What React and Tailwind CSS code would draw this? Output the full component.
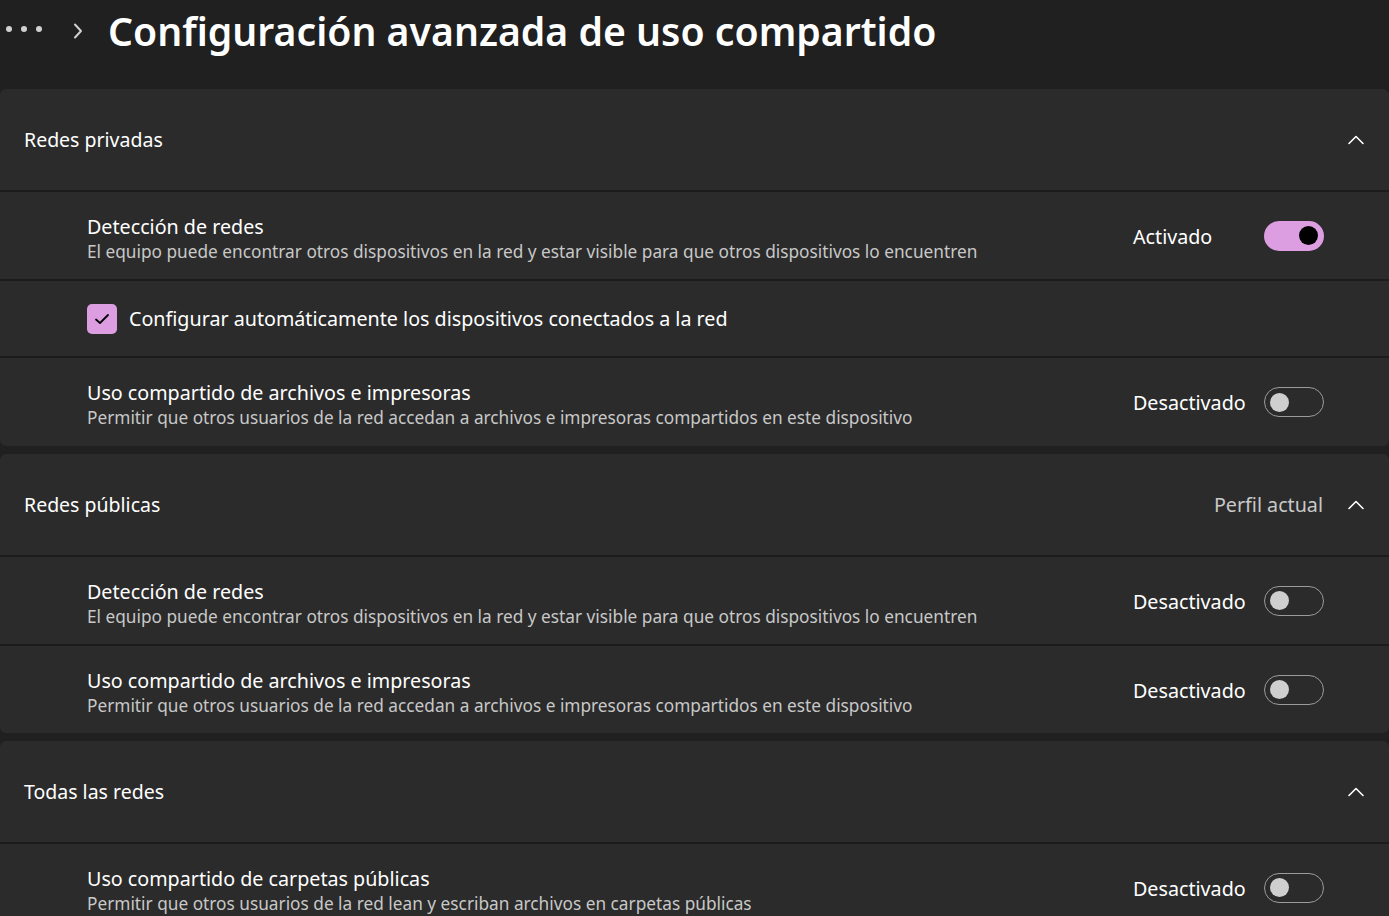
const FONT = { fontFamily: '"Segoe UI", "Noto Sans", "Open Sans", sans-serif' };

function Chevron() {
  return (
    <svg width="18" height="12" viewBox="0 0 18 12" className="shrink-0">
      <path d="M2 9.5 L9 2.5 L16 9.5" fill="none" stroke="#ffffff" strokeWidth="1.6" strokeLinecap="round" strokeLinejoin="round" />
    </svg>
  );
}

function Toggle({ on }) {
  if (on) {
    return (
      <div className="flex h-[30px] w-[60px] shrink-0 items-center justify-end rounded-full bg-[#dc9ee0] pr-[6px]">
        <div className="h-[19px] w-[19px] rounded-full bg-black" />
      </div>
    );
  }
  return (
    <div className="flex h-[30px] w-[60px] shrink-0 items-center rounded-full border-[1.5px] border-[#9b9b9b] pl-[4.5px]">
      <div className="h-[19px] w-[19px] rounded-full bg-[#cfcfcf]" />
    </div>
  );
}

function SectionHeader({ title, extra }) {
  return (
    <div className="flex h-[101px] items-center bg-[#2b2b2b] pl-[24px] pr-[24px]">
      <span className="flex-1 text-[19.5px] text-white">{title}</span>
      {extra && <span className="mr-[24px] text-[19.7px] text-[#c8c8c8]">{extra}</span>}
      <Chevron />
    </div>
  );
}

function SettingRow({ title, desc, on, h = "h-[87px]" }) {
  return (
    <div className={`flex ${h} items-center bg-[#2b2b2b] pl-[87px] pr-[65px]`}>
      <div className="flex flex-1 flex-col pt-[7px]">
        <span className="text-[19.7px] leading-[25px] text-white">{title}</span>
        <span className="text-[17.25px] leading-[26px] text-[#c8c8c8]">{desc}</span>
      </div>
      <span className="w-[112px] pt-[2px] text-[19.7px] text-white">{on ? "Activado" : "Desactivado"}</span>
      <div className="ml-[19px]">
        <Toggle on={on} />
      </div>
    </div>
  );
}

const detDesc =
  "El equipo puede encontrar otros dispositivos en la red y estar visible para que otros dispositivos lo encuentren";
const filesDesc =
  "Permitir que otros usuarios de la red accedan a archivos e impresoras compartidos en este dispositivo";

export default function App() {
  return (
    <div className="min-h-screen w-full overflow-hidden bg-[#202020]" style={FONT}>
      <header className="mb-[25px] flex h-[64px] items-center">
        <div className="flex w-[108px] items-center">
          <div className="mb-[6px] ml-[6px] flex gap-[9px]">
            <span className="h-[6px] w-[6px] rounded-full bg-[#d0d0d0]" />
            <span className="h-[6px] w-[6px] rounded-full bg-[#d0d0d0]" />
            <span className="h-[6px] w-[6px] rounded-full bg-[#d0d0d0]" />
          </div>
          <svg width="12" height="18" viewBox="0 0 12 18" className="mb-[2px] ml-[30px]">
            <path d="M3 2.5 L9 9 L3 15.5" fill="none" stroke="#d0d0d0" strokeWidth="2" strokeLinecap="round" strokeLinejoin="round" />
          </svg>
        </div>
        <h1 className="mb-[2px] text-[39.2px] font-semibold text-white">Configuración avanzada de uso compartido</h1>
      </header>

      <div className="flex flex-col gap-2">
        <section className="flex flex-col gap-[2px] overflow-hidden rounded-[6px] bg-[#1c1c1c]">
          <SectionHeader title="Redes privadas" />
          <SettingRow title="Detección de redes" desc={detDesc} on />
          <div className="flex h-[75px] items-center bg-[#2b2b2b] pl-[87px]">
            <div className="flex h-[30px] w-[30px] items-center justify-center rounded-[5px] bg-[#dc9ee0]">
              <svg width="16" height="12" viewBox="0 0 16 12">
                <path d="M2 6.5 L6 10 L14 2" fill="none" stroke="#000" strokeWidth="1.8" strokeLinecap="round" strokeLinejoin="round" />
              </svg>
            </div>
            <span className="ml-[12px] text-[19.7px] text-white">Configurar automáticamente los dispositivos conectados a la red</span>
          </div>
          <SettingRow title="Uso compartido de archivos e impresoras" desc={filesDesc} h="h-[88px]" />
        </section>

        <section className="flex flex-col gap-[2px] overflow-hidden rounded-[6px] bg-[#1c1c1c]">
          <SectionHeader title="Redes públicas" extra="Perfil actual" />
          <SettingRow title="Detección de redes" desc={detDesc} />
          <SettingRow title="Uso compartido de archivos e impresoras" desc={filesDesc} />
        </section>

        <section className="flex flex-col gap-[2px] overflow-hidden rounded-[6px] bg-[#1c1c1c]">
          <SectionHeader title="Todas las redes" />
          <SettingRow
            title="Uso compartido de carpetas públicas"
            desc="Permitir que otros usuarios de la red lean y escriban archivos en carpetas públicas"
          />
        </section>
      </div>
    </div>
  );
}
